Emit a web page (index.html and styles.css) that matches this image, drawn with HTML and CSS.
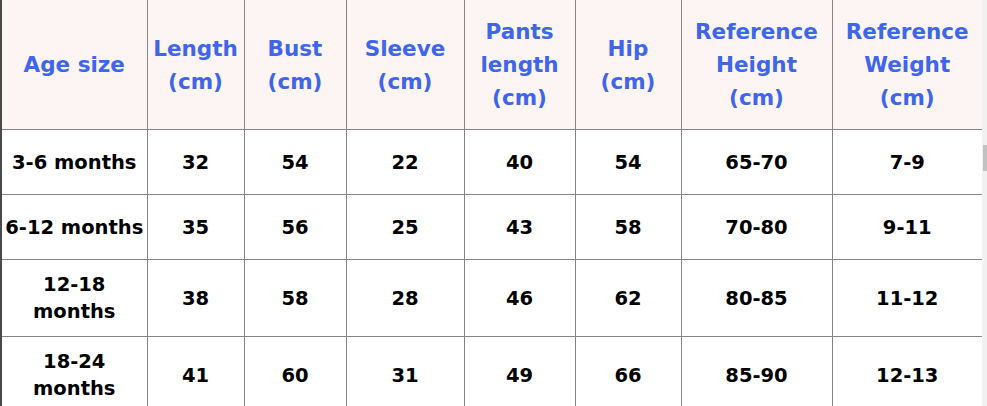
FILE: index.html
```html
<!DOCTYPE html>
<html>
<head>
<meta charset="utf-8">
<link rel="stylesheet" href="styles.css">
</head>
<body>
<div class="page">
  <table class="size-table">
    <colgroup>
      <col class="c1"><col class="c2"><col class="c3"><col class="c4"><col class="c5"><col class="c6"><col class="c7"><col class="c8">
    </colgroup>
    <thead>
      <tr>
        <th>Age size</th>
        <th>Length<br>(cm)</th>
        <th>Bust<br>(cm)</th>
        <th>Sleeve<br>(cm)</th>
        <th>Pants<br>length<br>(cm)</th>
        <th>Hip<br>(cm)</th>
        <th>Reference<br>Height<br>(cm)</th>
        <th>Reference<br>Weight<br>(cm)</th>
      </tr>
    </thead>
    <tbody>
      <tr class="r-short">
        <td>3-6 months</td><td>32</td><td>54</td><td>22</td><td>40</td><td>54</td><td>65-70</td><td>7-9</td>
      </tr>
      <tr class="r-short">
        <td>6-12 months</td><td>35</td><td>56</td><td>25</td><td>43</td><td>58</td><td>70-80</td><td>9-11</td>
      </tr>
      <tr class="r-tall">
        <td>12-18<br>months</td><td>38</td><td>58</td><td>28</td><td>46</td><td>62</td><td>80-85</td><td>11-12</td>
      </tr>
      <tr class="r-tall">
        <td>18-24<br>months</td><td>41</td><td>60</td><td>31</td><td>49</td><td>66</td><td>85-90</td><td>12-13</td>
      </tr>
    </tbody>
  </table>
  <div class="scrollbar"><div class="thumb"></div></div>
</div>
</body>
</html>
```
FILE: styles.css
```css
html, body {
  margin: 0;
  padding: 0;
  background: #ffffff;
  overflow: hidden;
}

.page {
  display: flex;
  align-items: flex-start;
  width: 987px;
  height: 406px;
  overflow: hidden;
}

.size-table {
  width: 982px;
  flex: 0 0 982px;
  table-layout: fixed;
  border-collapse: collapse;
  font-family: "DejaVu Sans", Verdana, sans-serif;
  font-weight: bold;
  text-align: center;
  border-left: 2px solid #4a4a4a;
}

.c1 { width: 146px; }
.c2 { width: 97px; }
.c3 { width: 102px; }
.c4 { width: 118px; }
.c5 { width: 111px; }
.c6 { width: 106px; }
.c7 { width: 151px; }
.c8 { width: 150px; }

.size-table th,
.size-table td {
  border: 1px solid #858585;
  padding: 0;
  vertical-align: middle;
}

.size-table thead th {
  border-top: none;
  background: #fdf4f4;
  color: #3d66ea;
  font-size: 21.5px;
  line-height: 33px;
  height: 129px;
}

.size-table tbody td {
  color: #000000;
  font-size: 19.5px;
  line-height: 27px;
}

.size-table th:last-child,
.size-table td:last-child {
  border-right: none;
}

.r-short td { height: 64px; }
.r-tall td { height: 76px; }

.scrollbar {
  flex: 0 0 5px;
  height: 406px;
  background: #f1f1f1;
  position: relative;
}

.thumb {
  position: absolute;
  left: 1px;
  top: 145px;
  width: 4px;
  height: 26px;
  background: #c2c2c2;
}
```
